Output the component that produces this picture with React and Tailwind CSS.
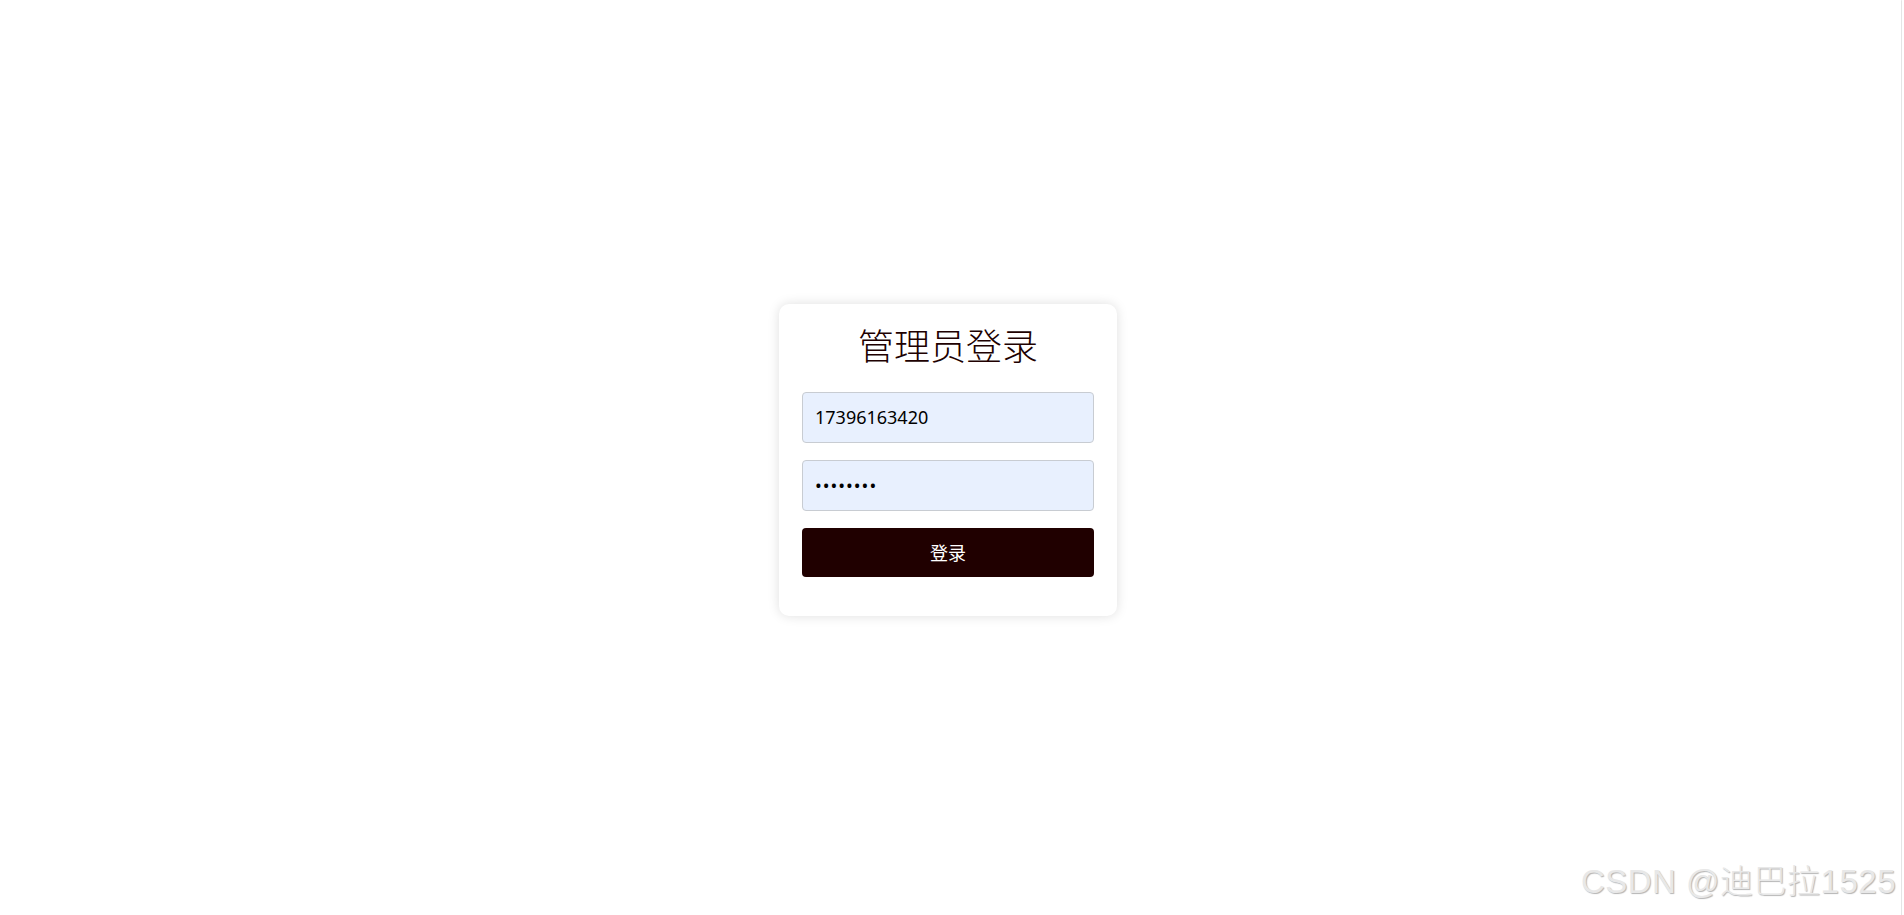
import React from "react";

export default function App() {
  return (
    <div className="relative w-full min-h-screen bg-white" style={{ height: 915 }}>
      <div className="absolute right-[2px] top-0 bottom-0 w-px bg-[#e5e5e5] rounded-tr-[6px]" />
      <div className="flex h-full w-full items-center justify-center pr-[8px] pt-[4px]">
        <div className="w-[338px] rounded-[10px] bg-white px-[23px] pt-[16px] pb-[39px] shadow-[0_0_12px_rgba(0,0,0,0.13)]">
          <h2 className="mb-[24px] text-center text-[36px] leading-[48px] text-[#200000] font-['Noto_Sans_CJK_SC',serif] font-light">
            管理员登录
          </h2>
          <div className="flex flex-col gap-[17px]">
            <input
              readOnly
              value="17396163420"
              className="h-[51px] w-full rounded-[4px] border border-[#c8ccd2] bg-[#e8f0fe] px-[12px] text-[18px] text-black outline-none font-['Noto_Sans','Noto_Sans_CJK_SC',sans-serif]"
            />
            <input
              readOnly
              type="password"
              value="12345678"
              className="h-[51px] w-full rounded-[4px] border border-[#c8ccd2] bg-[#e8f0fe] px-[12px] text-[18px] tracking-[1px] text-black outline-none font-['Noto_Sans','Noto_Sans_CJK_SC',sans-serif]"
            />
            <button className="h-[49px] w-full rounded-[4px] bg-[#200000] text-[18px] text-white font-['Noto_Sans_CJK_SC',sans-serif]">
              登录
            </button>
          </div>
        </div>
      </div>
      <div className="absolute bottom-[17px] right-[8px] text-[33px] leading-none tracking-[0.5px] text-[#e8e8e8] [text-shadow:1px_1px_1px_#b4b4b4] font-['Liberation_Sans','Noto_Sans_CJK_SC',sans-serif] font-light">
        CSDN @迪巴拉1525
      </div>
    </div>
  );
}
